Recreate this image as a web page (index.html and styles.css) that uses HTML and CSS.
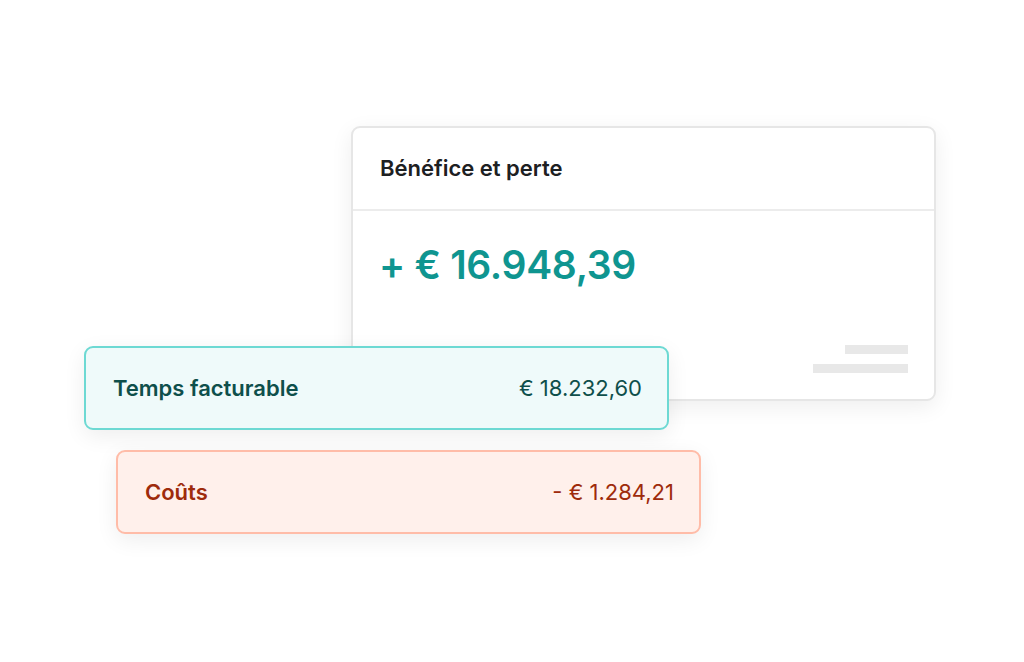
FILE: index.html
```html
<!DOCTYPE html>
<html lang="fr">
<head>
  <meta charset="UTF-8">
  <meta name="viewport" content="width=device-width, initial-scale=1.0">
  <title>Bénéfice et perte</title>
  <link rel="stylesheet" href="styles.css">
</head>
<body>
  <div class="stage">
    <div class="card summary">
      <div class="summary-head">Bénéfice et perte</div>
      <div class="summary-body">
        <div class="total">+ € 16.948,39</div>
        <div class="placeholder">
          <span class="line short"></span>
          <span class="line long"></span>
        </div>
      </div>
    </div>

    <div class="card row income">
      <span class="label">Temps facturable</span>
      <span class="amount">€ 18.232,60</span>
    </div>

    <div class="card row costs">
      <span class="label">Coûts</span>
      <span class="amount">- € 1.284,21</span>
    </div>
  </div>
</body>
</html>
```

FILE: styles.css
```css
body {
  margin: 0;
  background: #ffffff;
  font-family: Inter, 'Noto Sans', sans-serif;
}
.stage {
  position: relative;
  width: 1024px;
  height: 662px;
}
.card {
  position: absolute;
  box-sizing: border-box;
  width: 585px;
  border: 2px solid #e6e6e6;
  border-radius: 9px;
  background: #ffffff;
  box-shadow: 0 6px 22px rgba(0, 0, 0, 0.07);
}
.summary {
  left: 351px;
  top: 126px;
  height: 275px;
  display: flex;
  flex-direction: column;
}
.summary-head {
  height: 83px;
  box-sizing: border-box;
  padding: 27px 27px 0;
  border-bottom: 2px solid #ececec;
  font-size: 22px;
  font-weight: 600;
  color: #1d2022;
}
.summary-body {
  flex: 1;
  display: flex;
  flex-direction: column;
  justify-content: space-between;
  padding: 30px 26px 26px 26px;
}
.total {
  font-size: 39px;
  font-weight: 600;
  color: #0f9590;
  letter-spacing: -0.3px;
}
.placeholder {
  display: flex;
  flex-direction: column;
  align-items: flex-end;
  gap: 10px;
}
.line {
  display: block;
  height: 9px;
  background: #e8e8e8;
}
.line.short { width: 63px; }
.line.long { width: 95px; }
.row {
  height: 84px;
  display: flex;
  align-items: center;
  justify-content: space-between;
  padding: 0 25px 0 27px;
  font-size: 22px;
}
.label {
  font-weight: 600;
}
.amount {
  font-weight: 400;
}
.income {
  left: 84px;
  top: 346px;
  background: #effafa;
  border-color: #6dd9d3;
  color: #0e4f4b;
}
.costs {
  left: 116px;
  top: 450px;
  background: #fff0eb;
  border-color: #ffbca8;
  color: #9e2b0c;
}
```
